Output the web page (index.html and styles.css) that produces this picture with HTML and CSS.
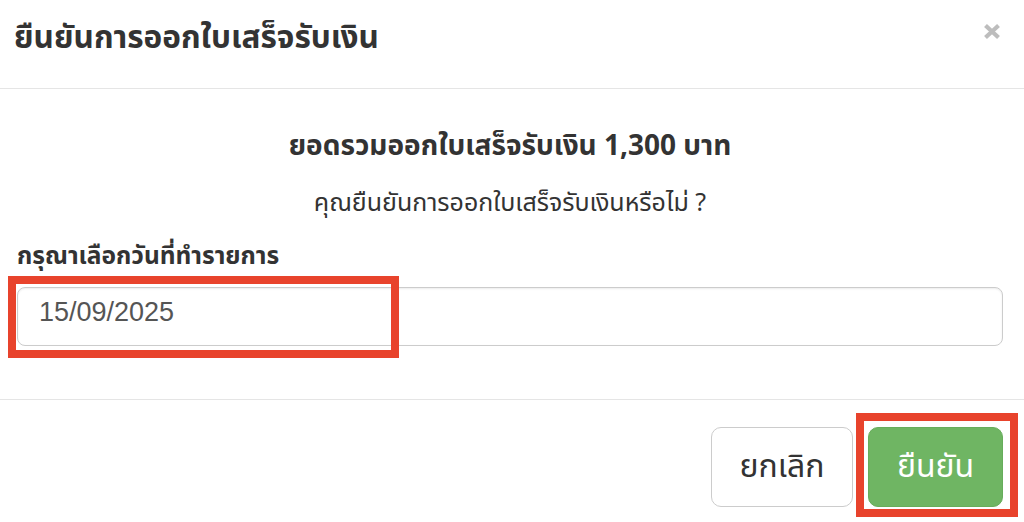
FILE: index.html
```html
<!DOCTYPE html>
<html lang="th">
<head>
<meta charset="utf-8">
<title>ยืนยันการออกใบเสร็จรับเงิน</title>
<link rel="stylesheet" href="styles.css">
</head>
<body>
<div class="modal">
  <div class="modal-header">
    <h4 class="modal-title">ยืนยันการออกใบเสร็จรับเงิน</h4>
    <button class="close" type="button" aria-label="Close">
      <svg width="18" height="17" viewBox="0 0 18 17"><path d="M2.5 2.5 L15.5 14.5 M15.5 2.5 L2.5 14.5" stroke="#bdbdbd" stroke-width="4.2" stroke-linecap="butt"/></svg>
    </button>
  </div>
  <div class="modal-body">
    <h3 class="total">ยอดรวมออกใบเสร็จรับเงิน 1,300 บาท</h3>
    <p class="question">คุณยืนยันการออกใบเสร็จรับเงินหรือไม่ ?</p>
    <label class="field-label">กรุณาเลือกวันที่ทำรายการ</label>
    <div class="field">
      <input class="form-control" type="text" value="15/09/2025">
      <span class="mark mark-input"></span>
    </div>
  </div>
  <div class="modal-footer">
    <button class="btn btn-default" type="button">ยกเลิก</button>
    <div class="btn-wrap">
      <button class="btn btn-success" type="button">ยืนยัน</button>
      <span class="mark mark-btn"></span>
    </div>
  </div>
</div>
</body>
</html>
```

FILE: styles.css
```css
html, body {
  margin: 0;
  padding: 0;
  background: #fff;
}
body {
  font-family: "Noto Sans Thai", "Noto Sans", "Liberation Sans", sans-serif;
  color: #333;
  width: 1024px;
  height: 522px;
  overflow: hidden;
}
.modal {
  display: flex;
  flex-direction: column;
  width: 1024px;
}
.modal-header {
  box-sizing: border-box;
  height: 89px;
  border-bottom: 1px solid #e5e5e5;
  display: flex;
  justify-content: space-between;
  align-items: flex-start;
  padding: 17px 23px 0 14px;
}
.modal-title {
  margin: 0;
  font-size: 31.5px;
  font-weight: 700;
  line-height: 44px;
  color: #333;
}
.close {
  margin: 6px 0 0 0;
  padding: 0;
  border: 0;
  background: transparent;
  line-height: 0;
}
.modal-body {
  padding: 0 21px 0 17px;
  display: flex;
  flex-direction: column;
  height: 310px;
  box-sizing: border-box;
}
.total {
  margin: 38px 0 0 0;
  text-align: center;
  font-size: 28px;
  font-weight: 700;
  line-height: 40px;
}
.question {
  margin: 19px 0 0 0;
  text-align: center;
  font-size: 25px;
  line-height: 35px;
}
.field-label {
  margin: 19px 0 0 0;
  font-size: 24.5px;
  font-weight: 700;
  line-height: 34px;
}
.field {
  position: relative;
  margin-top: 13px;
}
.form-control {
  box-sizing: border-box;
  display: block;
  width: 100%;
  height: 59px;
  padding: 0 21px 8px;
  border: 1px solid #ccc;
  border-radius: 8px;
  box-shadow: inset 0 1px 2px rgba(0,0,0,.08);
  font-family: "Liberation Sans", "Noto Sans", sans-serif;
  font-size: 27px;
  color: #555;
  background: #fff;
  outline: none;
}
.mark {
  position: absolute;
  box-sizing: border-box;
  border: 8px solid #e8432c;
  pointer-events: none;
}
.mark-input {
  left: -9px;
  top: -11px;
  width: 391px;
  height: 82px;
}
.modal-footer {
  border-top: 1px solid #e5e5e5;
  display: flex;
  justify-content: flex-end;
  align-items: flex-start;
  gap: 15px;
  padding: 27px 21px 0 0;
}
.btn {
  box-sizing: border-box;
  height: 80px;
  border-radius: 10px;
  font-family: "Noto Sans Thai", "Noto Sans", sans-serif;
  font-size: 32px;
  line-height: 1;
  padding: 0;
  cursor: pointer;
}
.btn-default {
  width: 142px;
  background: #fff;
  border: 1px solid #ccc;
  color: #333;
}
.btn-wrap {
  position: relative;
  display: flex;
}
.btn-success {
  width: 135px;
  background: #6fb563;
  border: 1px solid #67ad5b;
  color: #fff;
}
.mark-btn {
  left: -12px;
  top: -14px;
  width: 162px;
  height: 104px;
}
```
